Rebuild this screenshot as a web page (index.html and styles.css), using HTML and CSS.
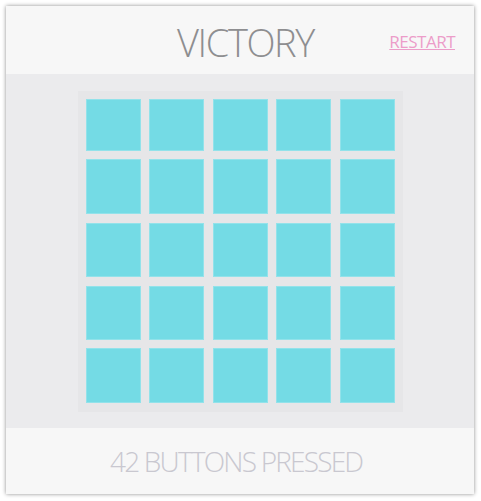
FILE: index.html
```html
<!DOCTYPE html>
<html>
<head>
<meta charset="utf-8">
<link rel="stylesheet" href="styles.css">
</head>
<body>
<div class="card">
  <header class="head">
    <h1 class="title">VICTORY</h1>
    <a class="restart" href="#">RESTART</a>
  </header>
  <main class="stage">
    <div class="board">
      <div class="tile"></div><div class="tile"></div><div class="tile"></div><div class="tile"></div><div class="tile"></div>
      <div class="tile"></div><div class="tile"></div><div class="tile"></div><div class="tile"></div><div class="tile"></div>
      <div class="tile"></div><div class="tile"></div><div class="tile"></div><div class="tile"></div><div class="tile"></div>
      <div class="tile"></div><div class="tile"></div><div class="tile"></div><div class="tile"></div><div class="tile"></div>
      <div class="tile"></div><div class="tile"></div><div class="tile"></div><div class="tile"></div><div class="tile"></div>
    </div>
  </main>
  <footer class="foot">42 BUTTONS PRESSED</footer>
</div>
</body>
</html>
```
FILE: styles.css
```css
html, body {
  margin: 0;
  padding: 0;
  background: #ffffff;
}
body {
  padding: 6px;
  font-family: "Open Sans", "Noto Sans", sans-serif;
  font-weight: 300;
}
.card {
  width: 468px;
  height: 488px;
  display: flex;
  flex-direction: column;
  background: #f7f7f7;
  box-shadow: 0 0 4px rgba(0, 0, 0, 0.45);
}
.head {
  height: 68px;
  display: flex;
  align-items: center;
  padding: 0 19px 0 0;
  box-sizing: border-box;
}
.title {
  flex: 1;
  margin: 4px 0 0 0;
  padding-left: 171px;
  font-size: 38px;
  font-weight: 300;
  color: #8e8e90;
  line-height: 1;
  letter-spacing: -1.4px;
  text-align: left;
}
.restart {
  font-size: 17px;
  font-weight: 400;
  color: #ec9dc9;
  text-decoration: underline;
  letter-spacing: -0.5px;
  margin-top: 2px;
}
.stage {
  height: 354px;
  background: #ebebed;
  display: flex;
  align-items: center;
  justify-content: center;
}
.board {
  width: 325px;
  height: 321px;
  box-sizing: border-box;
  padding: 8px;
  background: #e6e6e8;
  display: grid;
  grid-template-columns: repeat(5, 55px);
  grid-template-rows: 52px 55.5px 54.4px 54px 55.4px;
  column-gap: 8.5px;
  row-gap: 8.4px;
}
.tile {
  background: #74dbe5;
  border: 1px solid #92e2ea;
}
.foot {
  flex: 1;
  display: flex;
  align-items: center;
  padding-left: 104px;
  font-size: 28px;
  font-weight: 300;
  letter-spacing: -1.8px;
  color: #c9c8d0;
}
```
